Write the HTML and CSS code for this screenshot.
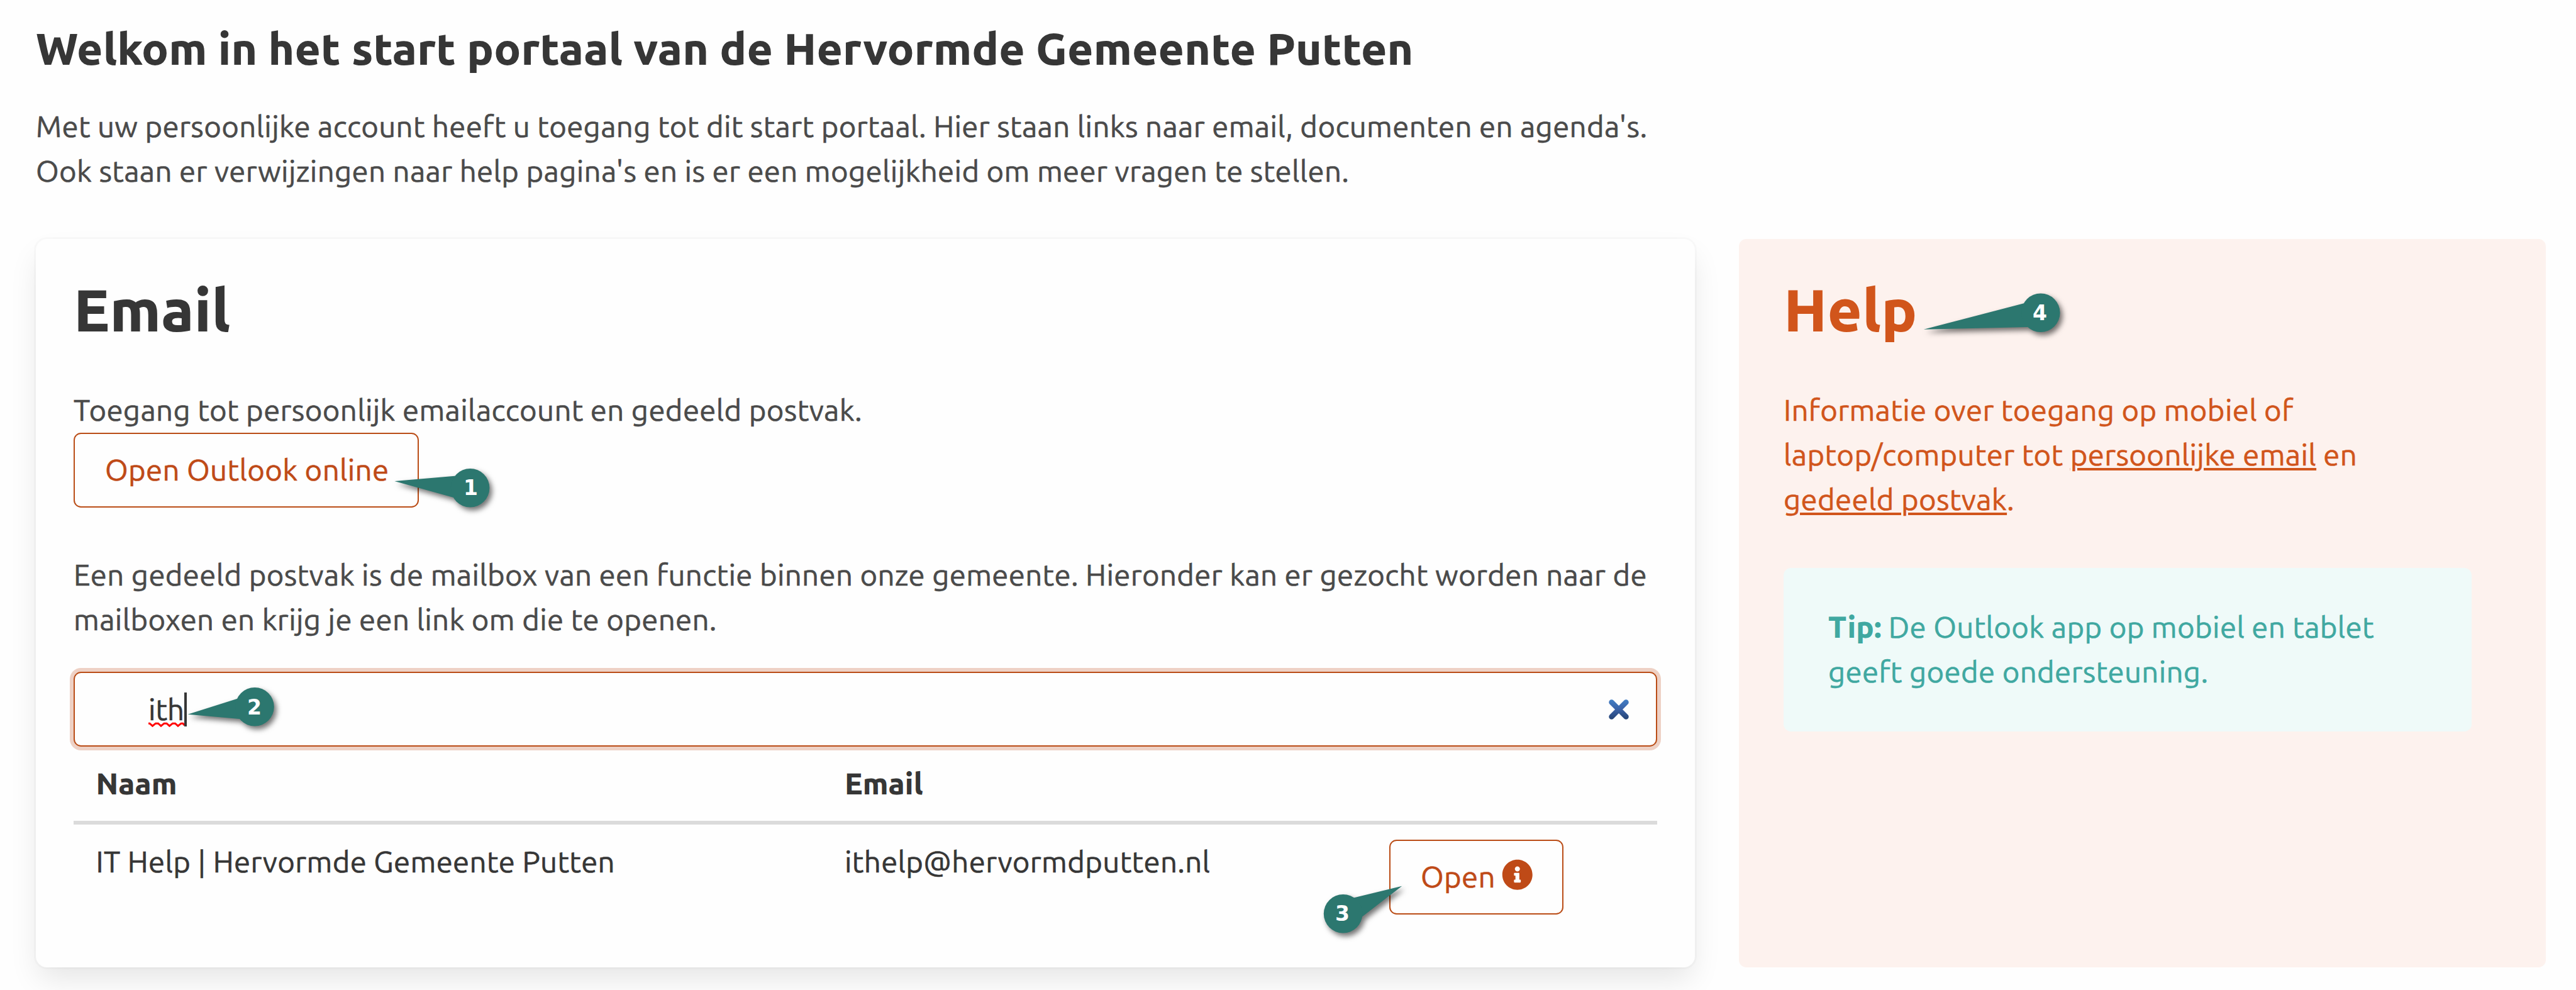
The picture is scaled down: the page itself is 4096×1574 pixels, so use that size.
FILE: index.html
```
<!DOCTYPE html>
<html lang="nl">
<head>
<meta charset="utf-8">
<title>Start portaal</title>
<link rel="stylesheet" href="styles.css">
</head>
<body>
<main class="page">
  <header class="intro">
    <h1 class="intro-title">Welkom in het start portaal van de Hervormde Gemeente Putten</h1>
    <p class="intro-text">Met uw persoonlijke account heeft u toegang tot dit start portaal. Hier staan links naar email, documenten en agenda's.<br>Ook staan er verwijzingen naar help pagina's en is er een mogelijkheid om meer vragen te stellen.</p>
  </header>
  <div class="columns">
    <section class="box">
      <h2 class="title">Email</h2>
      <p class="lead">Toegang tot persoonlijk emailaccount en gedeeld postvak.</p>
      <a class="button">Open Outlook online</a>
      <p class="mailboxes">Een gedeeld postvak is de mailbox van een functie binnen onze gemeente. Hieronder kan er gezocht worden naar de<br>mailboxen en krijg je een link om die te openen.</p>
      <div class="search">
        <span class="query">ith<svg class="squiggle" viewBox="0 0 57 8"><path d="M0 2.2h2l4.5 4 5-4h4l4.500 4 5-4h4l4.500 4 5-4h4l4.500 4 5-4h3l2 3"/></svg></span><span class="caret"></span>
        <svg class="clear" viewBox="0 0 34 34"><defs><linearGradient id="blue" gradientUnits="userSpaceOnUse" x1="0" y1="0" x2="0" y2="34"><stop offset="0" stop-color="#4381c7"/><stop offset=".5" stop-color="#3a61a6"/><stop offset="1" stop-color="#22406f"/></linearGradient></defs><path d="M5.500 5.500L28.500 28.500M28.500 5.500L5.500 28.500" stroke="url(#blue)"/></svg>
      </div>
      <div class="table">
        <div class="row head"><span>Naam</span><span>Email</span><span></span></div>
        <div class="row"><span>IT Help | Hervormde Gemeente Putten</span><span>ithelp@hervormdputten.nl</span><a class="button open">Open<svg class="info" viewBox="0 0 512 512"><path d="M256 8C119 8 8 119.100 8 256c0 137 111 248 248 248s248-111 248-248C504 119.100 393 8 256 8zm0 110c23.200 0 42 18.800 42 42s-18.800 42-42 42-42-18.800-42-42 18.800-42 42-42zm56 254c0 6.600-5.400 12-12 12h-88c-6.600 0-12-5.400-12-12v-24c0-6.600 5.400-12 12-12h12v-64h-12c-6.600 0-12-5.400-12-12v-24c0-6.600 5.400-12 12-12h64c6.600 0 12 5.400 12 12v100h12c6.600 0 12 5.400 12 12v24z"/></svg></a></div>
      </div>
    </section>
    <aside class="help">
      <h2 class="title">Help</h2>
      <p class="help-text">Informatie over toegang op mobiel of<br>laptop/computer tot <a>persoonlijke email</a> en<br><a>gedeeld postvak</a>.</p>
      <p class="tip"><b>Tip:</b> De Outlook app op mobiel en tablet<br>geeft goede ondersteuning.</p>
    </aside>
  </div>
</main>
<svg class="callouts" viewBox="0 0 4096 1574">
  <g><path d="M627.300 765L726 756.400L721 791z"/><circle cx="747.600" cy="775.800" r="30.800"/></g>
  <g><path d="M298.600 1135.800L378.400 1110.500L383 1143.300z"/><circle cx="405" cy="1123.700" r="30.800"/></g>
  <g><path d="M2229.200 1408.800L2150 1427.900L2164 1459z"/><circle cx="2135.600" cy="1452.800" r="30.800"/></g>
  <g><path d="M3058.700 523.800L3219 482L3224 520z"/><circle cx="3244.800" cy="497.200" r="30.800"/></g>
  <text x="748.500" y="786.900">1</text>
  <text x="404.500" y="1135.800">2</text>
  <text x="2134.500" y="1464.400">3</text>
  <text x="3243.500" y="508.800">4</text>
</svg>
</body>
</html>
```
FILE: styles.css
```
* { box-sizing: border-box; }

body {
  margin: 0;
  background: #fefefe;
  color: #4a4a4a;
  font: 47.3px/71px Ubuntu, "Noto Sans", sans-serif;
  letter-spacing: 0.0074em;
  -webkit-text-stroke: 0.6px currentColor;
}

h1, h2, p { margin: 0; }

h1, h2, b, .head {
  font-weight: 800;
  letter-spacing: 0.002em;
  -webkit-text-stroke: 0;
}

.page {
  width: 4096px;
  height: 1574px;
  padding: 37px 48px 0 57px;
  overflow: hidden;
  white-space: nowrap;
}

.intro-title {
  color: #363636;
  font-size: 71px;
  line-height: 80px;
  margin-bottom: 48px;
}

.columns {
  display: flex;
  justify-content: space-between;
  margin-top: 73px;
  height: 1158px;
}

.box {
  width: 2638px;
  padding: 59px 60px;
  border-radius: 17.7px;
  background: #fefefe;
  box-shadow: 0 23.7px 47.3px -5.9px rgba(10, 10, 10, .1), 0 0 0 3px rgba(10, 10, 10, .02);
}

.title {
  color: #363636;
  font-size: 94.6px;
  line-height: 106px;
  margin-bottom: 71px;
}

.button {
  display: flex;
  align-items: center;
  width: 549px;
  height: 119px;
  padding: 0 0 2px 48px;
  margin-top: 1px;
  border: 2px solid #ba4d17;
  border-radius: 11.8px;
  color: #bf4a17;
}

.mailboxes { margin-top: 71px; }

.search {
  position: relative;
  display: flex;
  align-items: center;
  height: 119px;
  margin-top: 48px;
  padding-left: 117px;
  border: 2px solid #ba4d17;
  border-radius: 11.8px;
  box-shadow: 0 0 0 6px #eed1c5;
  color: #363636;
}

.query {
  position: relative;
  letter-spacing: 0;
}

.squiggle {
  position: absolute;
  left: 0;
  top: 56px;
  width: 57px;
  height: 8px;
  fill: none;
  stroke: #f00;
  stroke-width: 3;
}

.caret {
  width: 4px;
  height: 54px;
  background: #363636;
}

.clear {
  width: 34px;
  height: 34px;
  margin-left: auto;
  margin-right: 42px;
  fill: none;
  stroke-width: 8.5;
  stroke-linecap: round;
}

.table { color: #363636; }

.row {
  display: grid;
  grid-template-columns: 1190.500px 902px 1fr;
  padding: 23px 0 0 35.500px;
  align-items: start;
}

.row .button { margin-left: -36px; }

.head {
  height: 124px;
  border-bottom: 6px solid #dbdbdb;
}

.open { width: 277px; }

.info {
  width: 49.500px;
  height: 49.500px;
  margin: -5px 0 0 10px;
  fill: #bf4a17;
}

.help {
  width: 1283px;
  padding: 59px 71px;
  border-radius: 11.8px;
  background: #fdf2ee;
  color: #d1551b;
}

.help .title { color: #d1551b; }

.help a {
  text-decoration: underline;
  text-decoration-thickness: 4px;
  text-underline-offset: 4px;
}

.tip {
  width: 1094px;
  height: 260px;
  margin-top: 74px;
  padding: 58px 71px;
  border-radius: 11.8px;
  background: #effaf9;
  color: #40a8a1;
}

/* Numbered markers pointing at parts of the page */
.callouts {
  position: absolute;
  left: 0;
  top: 0;
  width: 4096px;
  height: 1574px;
  fill: #2c776f;
}

.callouts g { filter: drop-shadow(4px 5px 4px rgba(0, 0, 0, .55)); }

.callouts text {
  fill: #fff;
  font: 700 33px "DejaVu Sans", sans-serif;
  letter-spacing: 0;
  text-anchor: middle;
  -webkit-text-stroke: 0;
}
```
